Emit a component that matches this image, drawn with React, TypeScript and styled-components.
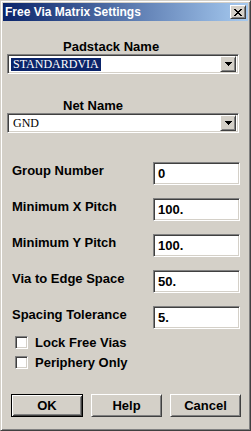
import React from 'react'
import styled, { createGlobalStyle, css } from 'styled-components'

const GlobalStyle = createGlobalStyle`
  html, body {
    margin: 0;
    padding: 0;
    background: #d4d0c8;
  }
  * {
    box-sizing: border-box;
  }
`

const sunken = css`
  border: 1px solid;
  border-color: #808080 #ffffff #ffffff #808080;
  box-shadow: inset 1px 1px #404040, inset -1px -1px #d4d0c8;
`

const raised = css`
  border: 1px solid;
  border-color: #ffffff #404040 #404040 #ffffff;
  box-shadow: inset 1px 1px #d4d0c8, inset -1px -1px #808080;
`

const Window = styled.div`
  width: 251px;
  height: 431px;
  background: #d4d0c8;
  border: 1px solid;
  border-color: #d4d0c8 #404040 #404040 #d4d0c8;
  box-shadow: inset 1px 1px #ffffff, inset -1px -1px #808080;
  padding: 2px;
  display: flex;
  flex-direction: column;
  font-family: "Liberation Sans", Arial, sans-serif;
  font-size: 13px;
  font-weight: bold;
  color: #000;
`

const TitleBar = styled.div`
  height: 18px;
  display: flex;
  align-items: center;
  background: linear-gradient(to right, #0a246a, #a6caf0);
  padding: 0 2px 0 2px;
`

const Title = styled.div`
  flex: 1;
  color: #fff;
  font-size: 12px;
  font-weight: bold;
  line-height: 14px;
`

const CloseButton = styled.div`
  width: 16px;
  height: 14px;
  background: #d4d0c8;
  ${raised};
  display: flex;
  align-items: center;
  justify-content: center;
`

const Body = styled.div`
  display: flex;
  flex-direction: column;
  padding: 0 0 0 4px;
`

const ComboLabel = styled.div<{ $top: number }>`
  margin-top: ${p => p.$top}px;
  padding-left: 56px;
  line-height: 15px;
  height: 15px;
`

const Combo = styled.div`
  width: 232px;
  height: 20px;
  background: #fff;
  ${sunken};
  display: flex;
  align-items: center;
  padding: 2px;
`

const ComboValue = styled.div`
  flex: 1;
  display: flex;
  align-items: center;
  padding-left: 1px;
`

const ComboText = styled.span<{ $selected?: boolean }>`
  font-family: "Liberation Serif", "Times New Roman", serif;
  font-size: 12px;
  font-weight: normal;
  line-height: 13px;
  padding: 0 2px;
  color: ${p => (p.$selected ? '#fff' : '#000')};
  background: ${p => (p.$selected ? '#0a246a' : 'transparent')};
`

const DropButton = styled.div`
  width: 16px;
  height: 16px;
  background: #d4d0c8;
  ${raised};
  display: flex;
  align-items: center;
  justify-content: center;
`

const Fields = styled.div`
  margin-top: 29px;
  display: flex;
  flex-direction: column;
  gap: 13px;
`

const FieldRow = styled.div`
  display: flex;
  align-items: flex-start;
  height: 23px;
`

const FieldLabel = styled.div`
  width: 146px;
  padding-left: 5px;
  padding-top: 1px;
  line-height: 15px;
  white-space: nowrap;
`

const FieldInput = styled.div`
  width: 87px;
  height: 23px;
  background: #fff;
  ${sunken};
  padding: 3px 0 0 4px;
  line-height: 15px;
`

const Checks = styled.div`
  margin-top: 6px;
  display: flex;
  flex-direction: column;
  gap: 5px;
`

const CheckRow = styled.div`
  display: flex;
  align-items: center;
  height: 15px;
  padding-left: 8px;
  gap: 7px;
`

const CheckBox = styled.div`
  width: 13px;
  height: 13px;
  background: #fff;
  ${sunken};
`

const ButtonBar = styled.div`
  margin-top: 24px;
  display: flex;
  gap: 8px;
  padding-left: 4px;
`

const Button = styled.div<{ $default?: boolean }>`
  width: ${p => (p.$default ? 72 : 71)}px;
  height: 23px;
  background: #d4d0c8;
  display: flex;
  align-items: center;
  justify-content: center;
  line-height: 15px;
  ${p =>
    p.$default
      ? css`
          border: 1px solid #000;
          box-shadow: inset 1px 1px #ffffff, inset -1px -1px #404040,
            inset 2px 2px #d4d0c8, inset -2px -2px #808080;
        `
      : raised};
`

const fields = [
  { label: 'Group Number', value: '0' },
  { label: 'Minimum X Pitch', value: '100.' },
  { label: 'Minimum Y Pitch', value: '100.' },
  { label: 'Via to Edge Space', value: '50.' },
  { label: 'Spacing Tolerance', value: '5.' },
]

function Arrow() {
  return (
    <svg width="7" height="4" viewBox="0 0 7 4">
      <path d="M0 0h7v1H0zM1 1h5v1H1zM2 2h3v1H2zM3 3h1v1H3z" fill="#000" />
    </svg>
  )
}

export default function App() {
  return (
    <>
      <GlobalStyle />
      <Window>
        <TitleBar>
          <Title>Free Via Matrix Settings</Title>
          <CloseButton>
            <svg width="8" height="7" viewBox="0 0 8 7">
              <path
                d="M0 0h2v1H0zM6 0h2v1H6zM1 1h2v1H1zM5 1h2v1H5zM2 2h4v1H2zM3 3h2v1H3zM2 4h4v1H2zM1 5h2v1H1zM5 5h2v1H5zM0 6h2v1H0zM6 6h2v1H6z"
                fill="#000"
              />
            </svg>
          </CloseButton>
        </TitleBar>
        <Body>
          <ComboLabel $top={18}>Padstack Name</ComboLabel>
          <Combo>
            <ComboValue>
              <ComboText $selected>STANDARDVIA</ComboText>
            </ComboValue>
            <DropButton>
              <Arrow />
            </DropButton>
          </Combo>
          <ComboLabel $top={24}>Net Name</ComboLabel>
          <Combo>
            <ComboValue>
              <ComboText>GND</ComboText>
            </ComboValue>
            <DropButton>
              <Arrow />
            </DropButton>
          </Combo>
          <Fields>
            {fields.map(f => (
              <FieldRow key={f.label}>
                <FieldLabel>{f.label}</FieldLabel>
                <FieldInput>{f.value}</FieldInput>
              </FieldRow>
            ))}
          </Fields>
          <Checks>
            <CheckRow>
              <CheckBox />
              <span>Lock Free Vias</span>
            </CheckRow>
            <CheckRow>
              <CheckBox />
              <span>Periphery Only</span>
            </CheckRow>
          </Checks>
          <ButtonBar>
            <Button $default>OK</Button>
            <Button>Help</Button>
            <Button>Cancel</Button>
          </ButtonBar>
        </Body>
      </Window>
    </>
  )
}
